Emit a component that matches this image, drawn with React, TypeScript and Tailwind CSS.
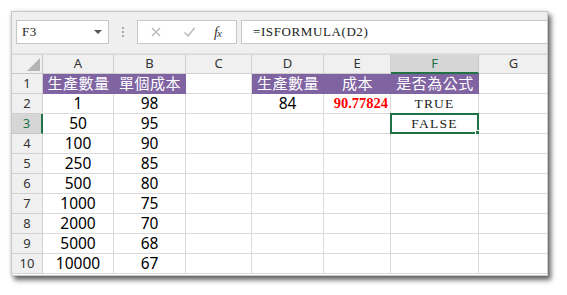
import { Fragment } from 'react';

type Cell = {
  v?: string;
  kind?: 'head' | 'num' | 'red' | 'bool';
};

const cols = ['A', 'B', 'C', 'D', 'E', 'F', 'G'];

const rows: Cell[][] = [
  [
    { v: '生產數量', kind: 'head' },
    { v: '單個成本', kind: 'head' },
    {},
    { v: '生產數量', kind: 'head' },
    { v: '成本', kind: 'head' },
    { v: '是否為公式', kind: 'head' },
    {},
  ],
  [{ v: '1', kind: 'num' }, { v: '98', kind: 'num' }, {}, { v: '84', kind: 'num' }, { v: '90.77824', kind: 'red' }, { v: 'TRUE', kind: 'bool' }, {}],
  [{ v: '50', kind: 'num' }, { v: '95', kind: 'num' }, {}, {}, {}, { v: 'FALSE', kind: 'bool' }, {}],
  ...[
    ['100', '90'],
    ['250', '85'],
    ['500', '80'],
    ['1000', '75'],
    ['2000', '70'],
    ['5000', '68'],
    ['10000', '67'],
  ].map(([a, b]) => [{ v: a, kind: 'num' as const }, { v: b, kind: 'num' as const }, {}, {}, {}, {}, {}]),
];

// MingLiU-like serif text used by the formula bar and booleans
const serifText = "text-[13px] tracking-[0.6px] text-[#222] font-['Liberation_Serif',serif]";

const DataCell = ({ cell, selected }: { cell: Cell; selected: boolean }) => {
  if (cell.kind === 'head') {
    return (
      <div className="h-[20px] bg-[#8064a2] border-b border-[#8064a2] flex items-center justify-center text-white text-[15px] font-['Noto_Sans_CJK_TC',sans-serif] tracking-[0.5px]">
        {cell.v}
      </div>
    );
  }
  return (
    <div className="relative h-[20px] border-r border-b border-[#dadada] bg-white">
      {cell.kind === 'num' && (
        <div className="h-full flex items-center justify-center text-[15.5px] text-black font-['Noto_Sans',sans-serif]">
          {cell.v}
        </div>
      )}
      {cell.kind === 'red' && (
        <div className="h-full flex items-center justify-end pr-[2px] text-[14.5px] font-bold text-[#ff0000] font-['Liberation_Serif',serif]">
          {cell.v}
        </div>
      )}
      {cell.kind === 'bool' && (
        <div className="h-full flex items-center justify-center pt-[1px] text-[13.5px] tracking-[1.2px] text-[#222] font-['Liberation_Serif',serif]">
          {cell.v}
        </div>
      )}
      {selected && (
        <div className="absolute -left-[1px] -top-[1px] right-[-1px] bottom-[-1px] border-2 border-[#217346]">
          <div className="absolute -right-[4px] -bottom-[4px] w-[6px] h-[6px] bg-[#217346] border border-white" />
        </div>
      )}
    </div>
  );
};

const App = () => {
  return (
    <div className="w-[567px] h-[295px] bg-white pt-[11px] pl-[11px]">
      <div className="w-[537px] h-[265px] bg-white border border-[#c8c8c8] shadow-[3px_4px_5px_rgba(0,0,0,0.6),0_0_4px_rgba(0,0,0,0.12)] overflow-hidden">
        {/* formula bar */}
        <div className="h-[42px] bg-[#efefef] flex items-start pt-[8px] pl-[4px] border-b border-[#e2e2e2]">
          <div className="w-[93px] h-[24px] bg-white border border-[#c6c6c6] flex items-center justify-between pl-[5px] pr-[6px]">
            <span className={serifText}>F3</span>
            <div className="w-0 h-0 border-l-[4px] border-r-[4px] border-t-[4px] border-l-transparent border-r-transparent border-t-[#555]" />
          </div>
          <div className="w-[28px] h-[24px] flex flex-col items-center justify-center gap-[2px]">
            <div className="w-[2px] h-[2px] bg-[#a8a8a8]" />
            <div className="w-[2px] h-[2px] bg-[#a8a8a8]" />
            <div className="w-[2px] h-[2px] bg-[#a8a8a8]" />
          </div>
          <div className="w-[100px] h-[24px] bg-white border border-[#c6c6c6] flex items-center pl-[12px]">
            <svg width="12" height="12" viewBox="0 0 12 12" className="mr-[21px]">
              <path d="M2 2 L10 10 M10 2 L2 10" stroke="#b8b8b8" strokeWidth="1.3" fill="none" />
            </svg>
            <svg width="13" height="12" viewBox="0 0 13 12" className="mr-[18px]">
              <path d="M1.5 6.5 L5 10 L11.5 2" stroke="#b8b8b8" strokeWidth="1.4" fill="none" />
            </svg>
            <span className="text-[14px] italic text-[#333] font-['Liberation_Serif',serif] tracking-[-1px]">
              f<span className="text-[11px]">x</span>
            </span>
          </div>
          <div className="ml-[4px] flex-1 h-[24px] bg-white border-y border-l border-[#c6c6c6] flex items-center pl-[11px]">
            <span className={serifText}>=ISFORMULA(D2)</span>
          </div>
        </div>

        {/* grid */}
        <div className="grid grid-cols-[31px_71px_72px_66px_72px_67px_88px_70px]">
          <div className="relative h-[20px] bg-[#f0f0f0] border-r border-b border-[#c8c8c8] border-t border-t-[#d8d8d8]">
            <svg width="13" height="13" viewBox="0 0 13 13" className="absolute right-[2px] bottom-[2px]">
              <polygon points="13,0 13,13 0,13" fill="#b4b4b4" />
            </svg>
          </div>
          {cols.map(c => (
            <div
              key={c}
              className={
                c === 'F'
                  ? 'h-[20px] bg-[#d6d6d6] border-r border-[#c8c8c8] border-t border-t-[#d8d8d8] border-b-2 border-b-[#217346] flex items-center justify-center text-[13px] text-[#217346] font-["Noto_Sans",sans-serif]'
                  : 'h-[20px] bg-[#f0f0f0] border-r border-b border-[#d0d0d0] border-t border-t-[#d8d8d8] flex items-center justify-center text-[13px] text-[#333] font-["Noto_Sans",sans-serif]'
              }
            >
              {c}
            </div>
          ))}
          {rows.map((row, r) => (
            <Fragment key={r}>
              <div
                className={
                  r === 2
                    ? 'h-[20px] bg-[#d6d6d6] border-r-2 border-r-[#217346] border-b border-b-[#c8c8c8] flex items-center justify-center text-[13px] text-[#217346] font-["Noto_Sans",sans-serif]'
                    : 'h-[20px] bg-[#f0f0f0] border-r border-b border-[#d0d0d0] flex items-center justify-center text-[13px] text-[#333] font-["Noto_Sans",sans-serif]'
                }
              >
                {r + 1}
              </div>
              {row.map((cell, c) => (
                <DataCell key={c} cell={cell} selected={r === 2 && c === 5} />
              ))}
            </Fragment>
          ))}
        </div>
      </div>
    </div>
  );
};

export default App;
